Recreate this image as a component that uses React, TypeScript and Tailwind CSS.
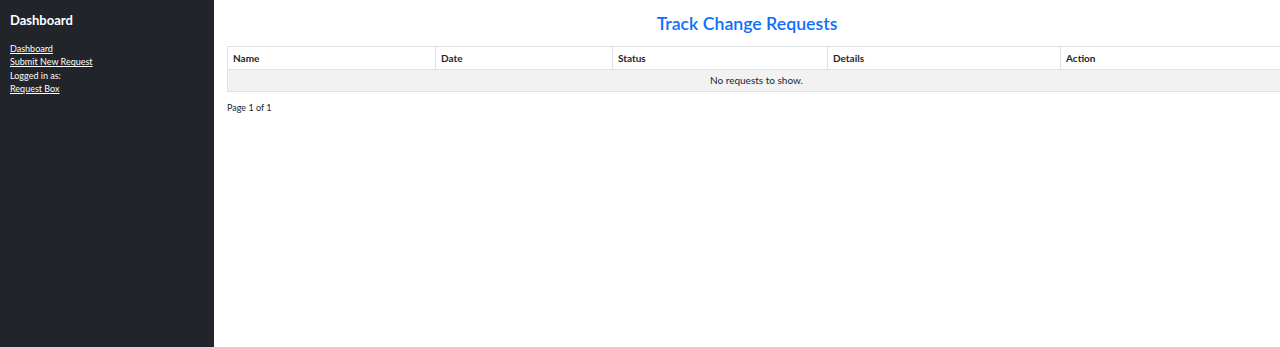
export default function App() {
  const columns = [
    { label: 'Name', width: 'w-[208px]' },
    { label: 'Date', width: 'w-[177px]' },
    { label: 'Status', width: 'w-[215px]' },
    { label: 'Details', width: 'w-[233px]' },
    { label: 'Action', width: 'w-[225px]' },
  ]

  return (
    <div className="flex h-[347px] w-[1280px] overflow-hidden bg-white font-['Lato',sans-serif] text-[10px] text-[#212529]">
      {/* Sidebar */}
      <div className="w-[214px] shrink-0 bg-[#212529] px-[10px] pt-[12px] text-white">
        <h2 className="mb-[13px] text-[13px] font-bold leading-[17px]">Dashboard</h2>
        <ul className="text-[9px] leading-[13.3px]">
          <li>
            <a href="#" className="underline">Dashboard</a>
          </li>
          <li>
            <a href="#" className="underline">Submit New Request</a>
          </li>
          <li>Logged in as:</li>
          <li>
            <a href="#" className="underline">Request Box</a>
          </li>
        </ul>
      </div>

      {/* Main */}
      <div className="min-w-0 flex-1 px-[13px] pt-[11px]">
        <h1 className="mb-[10px] text-center text-[17.7px] font-semibold leading-[25px] text-[#0d6efd]">
          Track Change Requests
        </h1>
        <table className="w-[1058px] table-fixed border-collapse">
          <thead>
            <tr>
              {columns.map((c) => (
                <th
                  key={c.label}
                  className={`${c.width} h-[23px] border border-[#dee2e6] px-[5px] text-left font-bold`}
                >
                  {c.label}
                </th>
              ))}
            </tr>
          </thead>
          <tbody>
            <tr className="bg-[#f2f2f2]">
              <td colSpan={5} className="h-[22px] border border-[#dee2e6] text-center">
                No requests to show.
              </td>
            </tr>
          </tbody>
        </table>
        <p className="mt-[9px] text-[9px]">Page 1 of 1</p>
      </div>
    </div>
  )
}
